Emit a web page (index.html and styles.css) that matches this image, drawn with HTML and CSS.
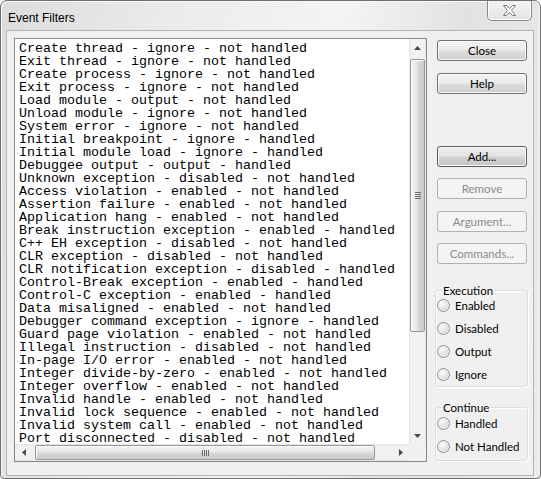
FILE: index.html
```html
<!DOCTYPE html>
<html>
<head>
<meta charset="utf-8">
<title>Event Filters</title>
<link rel="stylesheet" href="styles.css">
</head>
<body>
<div class="window">
  <div class="titlebar">
    <span class="title">Event Filters</span>
    <button class="close-x" aria-label="Close">
      <svg width="13" height="11" viewBox="0 0 13 11"><polygon points="0.5,0.5 3.5,0.5 6.5,3.5 9.5,0.5 12.5,0.5 8.5,5.5 12.5,10.5 9.5,10.5 6.5,7.5 3.5,10.5 0.5,10.5 4.5,5.5" fill="#fff" stroke="#777" stroke-width="1" stroke-linejoin="round"/></svg>
    </button>
  </div>
  <div class="client">
    <div class="listbox">
      <div class="items">
        <div class="item">Create thread - ignore - not handled</div>
        <div class="item">Exit thread - ignore - not handled</div>
        <div class="item">Create process - ignore - not handled</div>
        <div class="item">Exit process - ignore - not handled</div>
        <div class="item">Load module - output - not handled</div>
        <div class="item">Unload module - ignore - not handled</div>
        <div class="item">System error - ignore - not handled</div>
        <div class="item">Initial breakpoint - ignore - handled</div>
        <div class="item">Initial module load - ignore - handled</div>
        <div class="item">Debuggee output - output - handled</div>
        <div class="item">Unknown exception - disabled - not handled</div>
        <div class="item">Access violation - enabled - not handled</div>
        <div class="item">Assertion failure - enabled - not handled</div>
        <div class="item">Application hang - enabled - not handled</div>
        <div class="item">Break instruction exception - enabled - handled</div>
        <div class="item">C++ EH exception - disabled - not handled</div>
        <div class="item">CLR exception - disabled - not handled</div>
        <div class="item">CLR notification exception - disabled - handled</div>
        <div class="item">Control-Break exception - enabled - handled</div>
        <div class="item">Control-C exception - enabled - handled</div>
        <div class="item">Data misaligned - enabled - not handled</div>
        <div class="item">Debugger command exception - ignore - handled</div>
        <div class="item">Guard page violation - enabled - not handled</div>
        <div class="item">Illegal instruction - disabled - not handled</div>
        <div class="item">In-page I/O error - enabled - not handled</div>
        <div class="item">Integer divide-by-zero - enabled - not handled</div>
        <div class="item">Integer overflow - enabled - not handled</div>
        <div class="item">Invalid handle - enabled - not handled</div>
        <div class="item">Invalid lock sequence - enabled - not handled</div>
        <div class="item">Invalid system call - enabled - not handled</div>
        <div class="item">Port disconnected - disabled - not handled</div>
      </div>
      <div class="vscroll">
        <div class="sbtn"><svg width="7" height="4" viewBox="0 0 7 4"><polygon points="3.5,0 7,4 0,4" fill="#4a4a4a"/></svg></div>
        <div class="vtrack"><div class="vthumb"><span class="grip-h"></span></div></div>
        <div class="sbtn"><svg width="7" height="4" viewBox="0 0 7 4"><polygon points="0,0 7,0 3.5,4" fill="#4a4a4a"/></svg></div>
      </div>
      <div class="hscroll">
        <div class="sbtn"><svg width="4" height="7" viewBox="0 0 4 7"><polygon points="4,0 4,7 0,3.5" fill="#4a4a4a"/></svg></div>
        <div class="htrack"><div class="hthumb"><span class="grip-v"></span></div></div>
        <div class="sbtn"><svg width="4" height="7" viewBox="0 0 4 7"><polygon points="0,0 4,3.5 0,7" fill="#4a4a4a"/></svg></div>
      </div>
      <div class="corner"></div>
    </div>
    <div class="side">
      <button class="btn b-close">Close</button>
      <button class="btn b-help">Help</button>
      <button class="btn b-add">Add...</button>
      <button class="btn b-remove" disabled>Remove</button>
      <button class="btn b-arg" disabled>Argument...</button>
      <button class="btn b-cmd" disabled>Commands...</button>
      <fieldset class="group g-exec">
        <legend>Execution</legend>
        <label class="opt"><span class="radio"></span>Enabled</label>
        <label class="opt"><span class="radio"></span>Disabled</label>
        <label class="opt"><span class="radio"></span>Output</label>
        <label class="opt"><span class="radio"></span>Ignore</label>
      </fieldset>
      <fieldset class="group g-cont">
        <legend>Continue</legend>
        <label class="opt"><span class="radio"></span>Handled</label>
        <label class="opt"><span class="radio"></span>Not Handled</label>
      </fieldset>
    </div>
  </div>
</div>
</body>
</html>
```

FILE: styles.css
```css
html, body {
  margin: 0;
  padding: 0;
  background: #ffffff;
}

.window {
  width: 541px;
  height: 479px;
  box-sizing: border-box;
  border: 1px solid #6e6e6e;
  border-radius: 7px 7px 4px 4px;
  background: linear-gradient(100deg, #dcdcdc 0%, #ececec 30%, #f4f4f4 55%, #e2e2e2 75%, #ebebeb 100%);
  box-shadow: inset 1px 1px 0 #fafafa, inset -1px 0 0 #f5f5f5;
  display: flex;
  flex-direction: column;
  overflow: hidden;
}

.titlebar {
  height: 29px;
  display: flex;
  align-items: flex-start;
  flex: none;
}

.title {
  font-family: "Liberation Sans", Arial, sans-serif;
  font-size: 12px;
  color: #000;
  margin: 10px 0 0 7px;
  line-height: 14px;
}

.close-x {
  margin: -1px 8px 0 auto;
  width: 45px;
  height: 21px;
  padding: 0;
  border: 1px solid #8a8a8a;
  border-top: none;
  border-radius: 0 0 5px 5px;
  background: linear-gradient(#f4f4f4, #e4e4e4);
  box-shadow: inset 0 0 0 1px #fbfbfb;
  display: flex;
  align-items: center;
  justify-content: center;
}

.close-x svg {
  display: block;
  margin-top: 1px;
}

.client {
  flex: 1;
  margin: 0 6px 2px 5px;
  border: 1px solid #b4b4b4;
  background: #f0f0f0;
  display: flex;
  align-items: flex-start;
  padding: 7px 6px 0 7px;
}

.listbox {
  width: 413px;
  height: 424px;
  box-sizing: border-box;
  border: 1px solid #828790;
  background: #fff;
  display: grid;
  grid-template-columns: 394px 17px;
  grid-template-rows: 405px 17px;
  flex: none;
}

.items {
  overflow: hidden;
  padding: 3px 0 0 4px;
  font-family: "Liberation Mono", "Courier New", monospace;
  font-size: 13.33px;
  line-height: 13px;
  color: #000;
}

.item {
  white-space: pre;
  height: 13px;
}

.vscroll {
  display: flex;
  flex-direction: column;
  background: linear-gradient(90deg, #e3e3e3 0%, #f2f2f2 15%, #f2f2f2 85%, #e6e6e6 100%);
}

.hscroll {
  display: flex;
  background: linear-gradient(180deg, #e3e3e3 0%, #f2f2f2 15%, #f2f2f2 85%, #e6e6e6 100%);
}

.corner {
  background: #f0f0f0;
}

.sbtn {
  width: 17px;
  height: 17px;
  flex: none;
  display: flex;
  align-items: center;
  justify-content: center;
}

.sbtn svg {
  display: block;
}

.vtrack {
  flex: 1;
  padding: 3px 1px 0 1px;
}

.vthumb {
  height: 273px;
  box-sizing: border-box;
  border: 1px solid #979797;
  border-radius: 2px;
  background: linear-gradient(90deg, #f3f3f3 0%, #e8e8e8 45%, #d8d8d8 55%, #cbcbcb 100%);
  box-shadow: inset 1px 1px 0 #fdfdfd;
  display: flex;
  align-items: center;
  justify-content: center;
}

.grip-h {
  width: 6px;
  height: 7px;
  background: repeating-linear-gradient(180deg, #6a6a6a 0 1px, transparent 1px 2px);
}

.htrack {
  flex: 1;
  padding: 1px 0 1px 3px;
}

.hthumb {
  width: 340px;
  height: 100%;
  box-sizing: border-box;
  border: 1px solid #979797;
  border-radius: 2px;
  background: linear-gradient(180deg, #f3f3f3 0%, #e8e8e8 45%, #d8d8d8 55%, #cbcbcb 100%);
  box-shadow: inset 1px 1px 0 #fdfdfd;
  display: flex;
  align-items: center;
  justify-content: center;
}

.grip-v {
  width: 7px;
  height: 6px;
  background: repeating-linear-gradient(90deg, #6a6a6a 0 1px, transparent 1px 2px);
}

.side {
  margin-left: 10px;
  width: 90px;
  padding-top: 2px;
  display: flex;
  flex-direction: column;
  flex: none;
}

.btn {
  height: 21px;
  width: 90px;
  box-sizing: border-box;
  padding: 0;
  border: 1px solid #707070;
  border-radius: 3px;
  background: linear-gradient(180deg, #f2f2f2 0%, #ebebeb 48%, #dddddd 52%, #cfcfcf 100%);
  box-shadow: inset 0 0 0 1px #fbfbfb;
  font-family: Lato, "Liberation Sans", sans-serif;
  font-size: 11.5px;
  font-weight: 400;
  color: #000;
  line-height: 19px;
  text-align: center;
}

.btn:disabled {
  border-color: #adb2b5;
  background: #f4f4f4;
  box-shadow: none;
  color: #8a8a8a;
}

.b-help { margin-top: 12px; }
.b-add {
  margin-top: 52px;
  border-color: #5a5a5a;
  background: linear-gradient(180deg, #ededed 0%, #e2e2e2 48%, #d2d2d2 52%, #c6c6c6 100%);
}
.b-remove { margin-top: 11px; }
.b-arg { margin-top: 12px; }
.b-cmd { margin-top: 11px; }

.group {
  margin: 0 -1px 0 -2px;
  border: 1px solid #d5dfe5;
  border-radius: 3px;
  box-shadow: inset 1px 1px 0 #fff, 1px 1px 0 #fff;
  padding: 0 0 0 1px;
  display: flex;
  flex-direction: column;
  min-width: 0;
}

.group legend {
  font-family: Lato, "Liberation Sans", sans-serif;
  font-size: 11.5px;
  line-height: 7px;
  padding: 0 1px;
  margin-left: 5px;
  color: #000;
}

.g-exec {
  margin-top: 23px;
  padding-top: 0;
  padding-bottom: 0;
}

.g-cont {
  margin-top: 17px;
  padding-top: 1px;
  padding-bottom: 2px;
}

.opt {
  height: 23px;
  display: flex;
  align-items: center;
  gap: 5px;
  font-family: Lato, "Liberation Sans", sans-serif;
  font-size: 11.5px;
  color: #000;
}

.radio {
  width: 13px;
  height: 13px;
  box-sizing: border-box;
  border-radius: 50%;
  border: 1px solid #8f8f8f;
  background: radial-gradient(circle at 40% 35%, #fbfbfb 0%, #e6e6e6 45%, #cdcdcd 80%, #d8d8d8 100%);
  box-shadow: inset 0 0 0 1px #f4f4f4;
  flex: none;
}
```
